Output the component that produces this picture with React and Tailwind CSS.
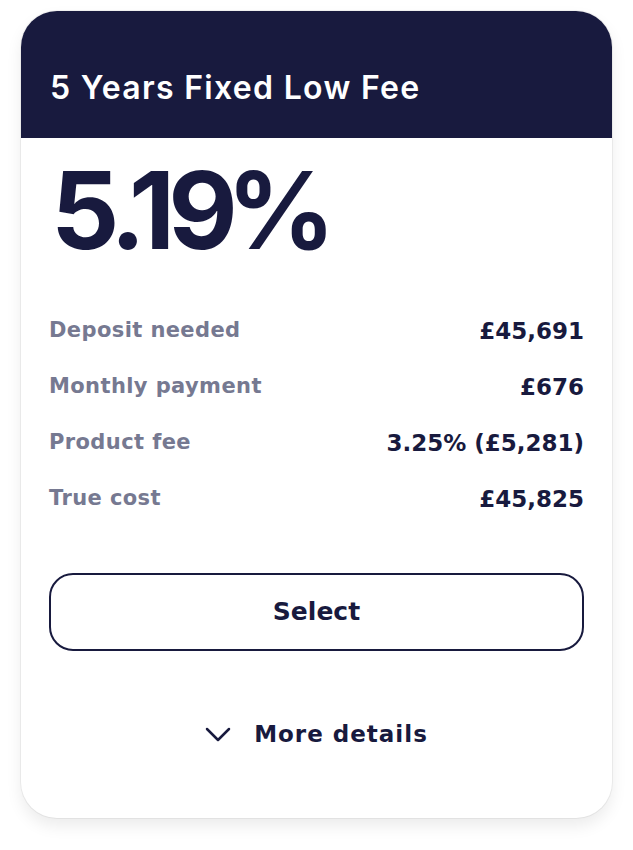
const rows = [
  { label: 'Deposit needed', value: '£45,691' },
  { label: 'Monthly payment', value: '£676' },
  { label: 'Product fee', value: '3.25% (£5,281)' },
  { label: 'True cost', value: '£45,825' },
]

export default function App() {
  return (
    <div className="min-h-screen bg-white pt-[11px] pl-[21px] font-['DejaVu_Sans',sans-serif]">
      <div className="w-[591px] h-[807px] rounded-[36px] bg-white overflow-hidden shadow-[0_8px_16px_rgba(0,0,0,0.08)] ring-1 ring-black/5">
        {/* Header */}
        <div className="h-[127px] bg-[#181a3e] flex items-end pb-[34px] px-[29px]">
          <h1 className="font-['Inter',sans-serif] text-[32px] font-semibold text-white leading-none tracking-[1.3px]">5 Years Fixed Low Fee</h1>
        </div>

        <div className="px-[28px]">
          <div className="font-['Inter',sans-serif] text-[107px] font-bold text-[#181a3e] leading-none tracking-[-7px] pt-[19px] pl-[2px]">
            5.19<span className="ml-[-4px]">%</span>
          </div>

          {/* Details */}
          <div className="mt-[54px] flex flex-col gap-[30px]">
            {rows.map((r) => (
              <div key={r.label} className="flex items-center justify-between h-[26px]">
                <span className="text-[21px] font-bold text-[#767991] tracking-[0.4px]">{r.label}</span>
                <span className="text-[23px] font-bold text-[#181a3e]">{r.value}</span>
              </div>
            ))}
          </div>

          <button className="mt-[61px] w-full h-[78px] rounded-[24px] border-2 border-[#181a3e] text-[25px] font-bold text-[#181a3e]">
            Select
          </button>

          <div className="mt-[66px] flex items-center justify-center gap-[23px] text-[#181a3e]">
            <svg width="26" height="16" viewBox="0 0 26 16" fill="none" stroke="currentColor" strokeWidth="2.5" strokeLinecap="round" strokeLinejoin="round">
              <path d="M2 3l11 11L24 3" />
            </svg>
            <span className="text-[23px] font-bold tracking-[1px]">More details</span>
          </div>
        </div>
      </div>
    </div>
  )
}
